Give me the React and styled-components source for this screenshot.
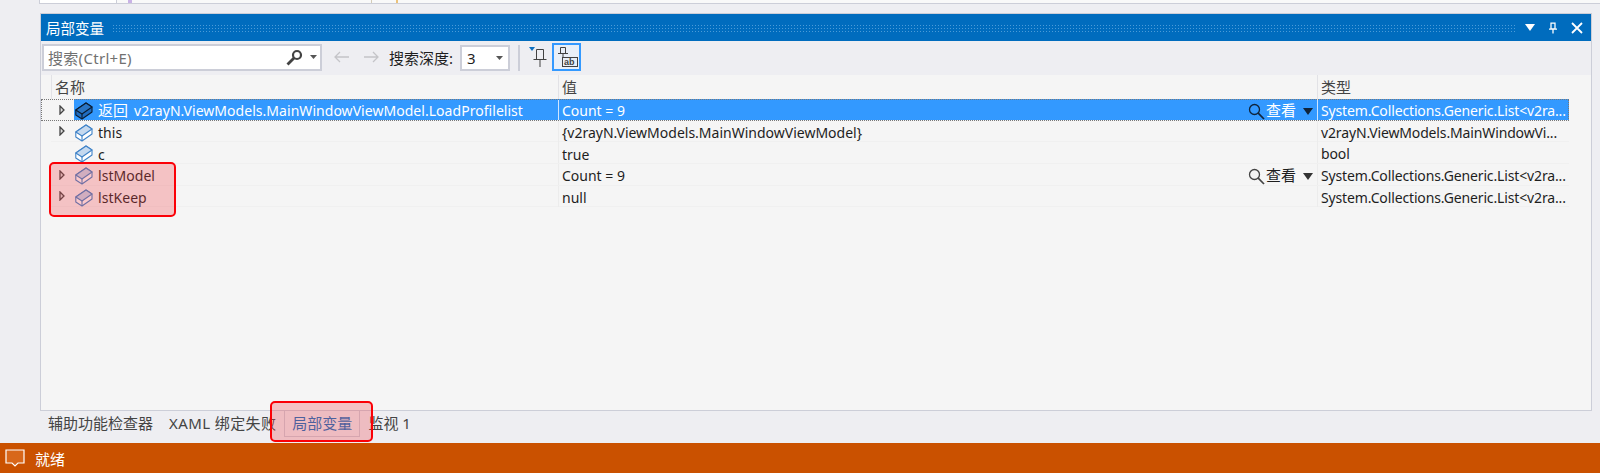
import React from "react";
import styled, { createGlobalStyle } from "styled-components";

const Global = createGlobalStyle`
  html, body { margin: 0; padding: 0; background: #eeeef2; }
  body { font-family: "Noto Sans", "Noto Sans CJK SC", sans-serif; font-size: 14px; color: #1e1e1e; }
`;

const Page = styled.div`
  position: relative;
  width: 1600px;
  height: 473px;
  overflow: hidden;
  display: flex;
  flex-direction: column;
  background: #eeeef2;
`;

const Main = styled.div`
  flex: 1;
  display: flex;
  flex-direction: column;
  padding-left: 40px;
  padding-right: 8px;
`;

const TopStrip = styled.div`
  height: 4px;
  flex: none;
  box-sizing: border-box;
  margin-left: -1px;
  margin-right: -8px;
  background: #f9f9f9;
  border-bottom: 1px solid #ccced8;
  display: flex;
`;

const TopCell = styled.div`
  width: 76px;
  background: #fff;
  border-left: 1px solid #ccced8;
  border-right: 1px solid #ccced8;
`;

const TopMark = styled.span`
  width: ${(p) => p.$w}px;
  margin-left: ${(p) => p.$gap}px;
  background: ${(p) => p.$color};
`;

const Panel = styled.section`
  margin-top: 9px;
  height: 398px;
  flex: none;
  box-sizing: border-box;
  border: 1px solid #ccced8;
  display: flex;
  flex-direction: column;
  background: #f5f5f5;
`;

const TitleBar = styled.div`
  height: 27px;
  flex: none;
  background: #006cbe;
  color: #fff;
  display: flex;
  align-items: center;
  padding-left: 5px;
  padding-right: 8px;
  font-size: 14.5px;
`;

const Grip = styled.div`
  flex: 1;
  height: 8px;
  margin-left: 8px;
  background-image: radial-gradient(#4b9bd8 0.7px, transparent 0.8px);
  background-size: 3px 3px;
`;

const TitleIcons = styled.div`
  display: flex;
  align-items: center;
  gap: 14px;
  margin-left: 10px;
`;

const Toolbar = styled.div`
  height: 34px;
  flex: none;
  box-sizing: border-box;
  background: #eeeef2;
  display: flex;
  align-items: center;
  padding-left: 1px;
  padding-bottom: 2px;
`;

const SearchBox = styled.div`
  width: 280px;
  height: 27px;
  box-sizing: border-box;
  background: #fff;
  border: 2px solid #ccced8;
  display: flex;
  align-items: center;
  padding: 0 3px 0 4px;
  color: #717171;
  font-size: 15px;
`;

const SearchText = styled.span`
  flex: 1;
  letter-spacing: 0.3px;
`;

const SearchCaret = styled.span`
  display: flex;
  margin-left: 7px;
`;

const NavArrows = styled.div`
  display: flex;
  align-items: center;
  gap: 13px;
  margin-left: 11px;
`;

const DepthLabel = styled.span`
  margin-left: 9px;
  font-size: 15px;
`;

const DepthSelect = styled.div`
  width: 50px;
  height: 26px;
  box-sizing: border-box;
  margin-left: 7px;
  margin-top: 2px;
  background: #fff;
  border: 2px solid #ccced8;
  display: flex;
  align-items: center;
  justify-content: space-between;
  padding: 0 5px;
  font-size: 15px;
`;

const ToolSep = styled.div`
  width: 2px;
  height: 26px;
  margin-top: 2px;
  background: #ccced8;
  margin-left: 8px;
  margin-right: 4px;
`;

const ToolButton = styled.div`
  width: ${(p) => (p.$active ? 29 : 28)}px;
  height: 28px;
  box-sizing: border-box;
  display: flex;
  align-items: center;
  justify-content: center;
  border: 2px solid ${(p) => (p.$active ? "#3399ff" : "transparent")};
  background: ${(p) => (p.$active ? "#e8eff8" : "transparent")};
`;

const Columns = "507px 759px 252px";

const HeaderRow = styled.div`
  height: 24px;
  flex: none;
  display: grid;
  grid-template-columns: ${Columns};
  margin-left: 10px;
  font-size: 15px;
  color: #444;
`;

const HeaderCell = styled.div`
  display: flex;
  align-items: center;
  padding-left: 3px;
  padding-bottom: 1px;
  border-left: 1px solid #e2e2e6;
`;

const Rows = styled.div`
  flex: 1;
`;

const Row = styled.div`
  height: 21.7px;
  box-sizing: border-box;
  display: grid;
  grid-template-columns: ${Columns};
  width: ${(p) => (p.$selected ? "1528px" : "1518px")};
  margin-left: ${(p) => (p.$selected ? "0" : "10px")};
  padding-left: ${(p) => (p.$selected ? "10px" : "0")};
  border-bottom: 1px solid ${(p) => (p.$selected ? "transparent" : "#f0f0f0")};
  color: ${(p) => (p.$selected ? "#fff" : "#1e1e1e")};
  outline: ${(p) => (p.$selected ? "1px dotted #777" : "none")};
  outline-offset: -1px;
  font-size: 14px;
  line-height: 17.6px;
  white-space: nowrap;
`;

const NameCell = styled.div`
  display: flex;
  align-items: center;
  padding-left: 4px;
`;

const Twisty = styled.span`
  width: 13px;
  margin-right: 6px;
  flex: none;
  display: flex;
  align-items: center;
  justify-content: center;
`;

const NameBody = styled.div`
  flex: 1;
  height: 100%;
  box-sizing: border-box;
  display: flex;
  align-items: center;
  gap: 5px;
  padding-left: 1px;
  padding-top: 3px;
  letter-spacing: 0.04px;
  background: ${(p) => (p.$selected ? "#3399ff" : "transparent")};
`;

const ReturnLabel = styled.span`
  font-size: 15px;
  margin-right: 6px;
`;

const ValueCell = styled.div`
  display: flex;
  align-items: center;
  justify-content: space-between;
  padding: 3px 4px 0 3px;
  background: ${(p) => (p.$selected ? "#3399ff" : "transparent")};
  border-left: 1px solid ${(p) => (p.$selected ? "#cfe5ff" : "#ececec")};
`;

const Visualizer = styled.span`
  display: flex;
  align-items: center;
  gap: 1px;
  font-size: 15px;
`;

const VisualizerCaret = styled.span`
  display: flex;
  margin-left: 6px;
`;

const TypeCell = styled.div`
  padding: 3px 0 0 3px;
  overflow: hidden;
  letter-spacing: -0.14px;
  background: ${(p) => (p.$selected ? "#3399ff" : "transparent")};
  border-left: 1px solid ${(p) => (p.$selected ? "#cfe5ff" : "#ececec")};
`;

const TabStrip = styled.div`
  flex: 1;
  display: flex;
  align-items: flex-start;
  font-size: 15px;
`;

const Tab = styled.div`
  height: 25px;
  line-height: 24px;
  padding: 0 7px;
  letter-spacing: ${(p) => p.$tracking || 0}px;
  color: ${(p) => (p.$active ? "#0e70c0" : "#444")};
  border: 1px solid ${(p) => (p.$active ? "#ccced8" : "transparent")};
  border-top: 0;
`;

const StatusBar = styled.footer`
  height: 30px;
  flex: none;
  background: #ca5100;
  color: #fff;
  display: flex;
  align-items: center;
  gap: 10px;
  padding-left: 5px;
  font-size: 15px;
`;

const Highlight = styled.div`
  position: absolute;
  left: ${(p) => p.$x}px;
  top: ${(p) => p.$y}px;
  width: ${(p) => p.$w}px;
  height: ${(p) => p.$h}px;
  box-sizing: border-box;
  border: 2px solid #fb0007;
  border-radius: 5px;
  background: rgba(240, 60, 70, 0.28);
`;

const Arrow = ({ flip }) => (
  <svg width="17" height="14" viewBox="0 0 17 14" fill="none" stroke="#c4c4c8" strokeWidth="1.3">
    <path d={flip ? "M1 7h14M10 2l5 5-5 5" : "M16 7H2M7 2 2 7l5 5"} />
  </svg>
);

const Caret = ({ color = "#555", size = 7 }) => (
  <svg width={size} height={size - 3} viewBox="0 0 7 4" preserveAspectRatio="none">
    <path d="M0 0h7L3.5 4z" fill={color} />
  </svg>
);

const Expander = () => (
  <svg width="6" height="10" viewBox="0 0 6 10" fill="#ddd" stroke="#444" strokeWidth="1.3">
    <path d="M1 1l4 4-4 4z" />
  </svg>
);

// the blue "field" brick icon of the locals window
const Brick = ({ selected }) => {
  const line = selected ? "#0b1c30" : "#3f83c8";
  return (
    <svg width="18" height="18" viewBox="0 0 18 18" fill="none" strokeWidth="1.1" strokeLinejoin="round">
      <path d="M.8 8 11 1l6 4v5L7 17 .8 13z" fill={selected ? "#1f6cc0" : "#fff"} stroke={line} />
      <path d="M.8 8 11 1l6 4L7 12z" fill={selected ? "#2a75c4" : "#c5d9ef"} stroke={line} />
      <path d="M7 12v5" stroke={line} />
    </svg>
  );
};

const Magnifier = ({ color }) => (
  <svg width="17" height="17" viewBox="0 0 17 17" fill="none" stroke={color} strokeWidth="1.3">
    <circle cx="6.5" cy="6.5" r="5" />
    <path d="M10.2 10.2 16 16" strokeWidth="1.7" />
  </svg>
);

const SearchGlyph = () => (
  <svg width="17" height="17" viewBox="0 0 17 17" fill="none" stroke="#424242">
    <circle cx="11" cy="6" r="4" strokeWidth="2.2" />
    <path d="M8 9 1.5 15.5" strokeWidth="2.8" />
  </svg>
);

const PinSmall = () => (
  <svg width="19" height="22" viewBox="0 0 19 22" fill="none" stroke="#424242">
    <path d="M0 1h6L3 5z" fill="#0e70c0" stroke="none" />
    <path d="M7.5 3.5h7v10h-7zM4.5 13.5h13M11 14v7" />
  </svg>
);

const PinLabel = () => (
  <svg width="22" height="22" viewBox="0 0 22 22" fill="none" stroke="#424242">
    <path d="M4.5 1.5h5v6h-5zM2 7.5h10M7 8v4" />
    <rect x="6.5" y="11.5" width="15" height="9" />
    <text x="8" y="19" fontSize="9" fontFamily="Liberation Sans, sans-serif" fontWeight="700" fill="#424242" stroke="none">ab</text>
  </svg>
);

const COUNT = "Count = 9";
const LIST = "System.Collections.Generic.List<v2ra...";

const ROWS = [
  { name: <><ReturnLabel>返回</ReturnLabel>v2rayN.ViewModels.MainWindowViewModel.LoadProfilelist</>, value: COUNT, type: LIST, view: true, selected: true, expand: true },
  { name: "this", value: "{v2rayN.ViewModels.MainWindowViewModel}", type: "v2rayN.ViewModels.MainWindowVi...", expand: true },
  { name: "c", value: "true", type: "bool" },
  { name: "lstModel", value: COUNT, type: LIST, view: true, expand: true },
  { name: "lstKeep", value: "null", type: LIST, expand: true },
];

export default function App() {
  return (
    <Page>
      <Global />
      <Main>
        <TopStrip>
          <TopCell />
          <TopMark $w={4} $gap={11} $color="#c9b2e6" />
          <TopMark $w={1} $gap={239} $color="#d4ccb8" />
          <TopMark $w={2} $gap={24} $color="#ecc27a" />
        </TopStrip>
        <Panel>
          <TitleBar>
            局部变量
            <Grip />
            <TitleIcons>
              <Caret color="#fff" size={10} />
              <svg width="8" height="14" viewBox="0 0 10 14" fill="none" stroke="#fff" strokeWidth="1.6">
                <path d="M2.5 1h5v7h-5zM0 8.5h10M5 9v5" />
              </svg>
              <svg width="12" height="12" viewBox="0 0 12 12" stroke="#fff" strokeWidth="1.8">
                <path d="M1 1l10 10M11 1 1 11" />
              </svg>
            </TitleIcons>
          </TitleBar>
          <Toolbar>
            <SearchBox>
              <SearchText>搜索(Ctrl+E)</SearchText>
              <SearchGlyph />
              <SearchCaret>
                <Caret />
              </SearchCaret>
            </SearchBox>
            <NavArrows>
              <Arrow />
              <Arrow flip />
            </NavArrows>
            <DepthLabel>搜索深度:</DepthLabel>
            <DepthSelect>
              3
              <Caret />
            </DepthSelect>
            <ToolSep />
            <ToolButton>
              <PinSmall />
            </ToolButton>
            <ToolButton $active>
              <PinLabel />
            </ToolButton>
          </Toolbar>
          <HeaderRow>
            <HeaderCell>名称</HeaderCell>
            <HeaderCell>值</HeaderCell>
            <HeaderCell>类型</HeaderCell>
          </HeaderRow>
          <Rows>
            {ROWS.map((row, i) => (
              <Row key={i} $selected={row.selected}>
                <NameCell>
                  <Twisty>{row.expand && <Expander />}</Twisty>
                  <NameBody $selected={row.selected}>
                    <Brick selected={row.selected} />
                    <span>{row.name}</span>
                  </NameBody>
                </NameCell>
                <ValueCell $selected={row.selected}>
                  {row.value}
                  {row.view && (
                    <Visualizer>
                      <Magnifier color={row.selected ? "#10243a" : "#444"} />
                      查看
                      <VisualizerCaret>
                        <Caret color={row.selected ? "#10243a" : "#333"} size={10} />
                      </VisualizerCaret>
                    </Visualizer>
                  )}
                </ValueCell>
                <TypeCell $selected={row.selected}>{row.type}</TypeCell>
              </Row>
            ))}
          </Rows>
        </Panel>
        <TabStrip>
          <Tab>辅助功能检查器</Tab>
          <Tab $tracking={0.4}>XAML 绑定失败</Tab>
          <Tab $active>局部变量</Tab>
          <Tab>监视 1</Tab>
        </TabStrip>
      </Main>
      <StatusBar>
        <svg width="20" height="20" viewBox="0 0 20 20" fill="#d8671a" stroke="#fff" strokeWidth="1.2">
          <path d="M1 2h18v13h-6l-3 3-3-3H1z" />
        </svg>
        就绪
      </StatusBar>
      <Highlight $x={49} $y={162} $w={127} $h={55} />
      <Highlight $x={270} $y={401} $w={103} $h={41} />
    </Page>
  );
}
